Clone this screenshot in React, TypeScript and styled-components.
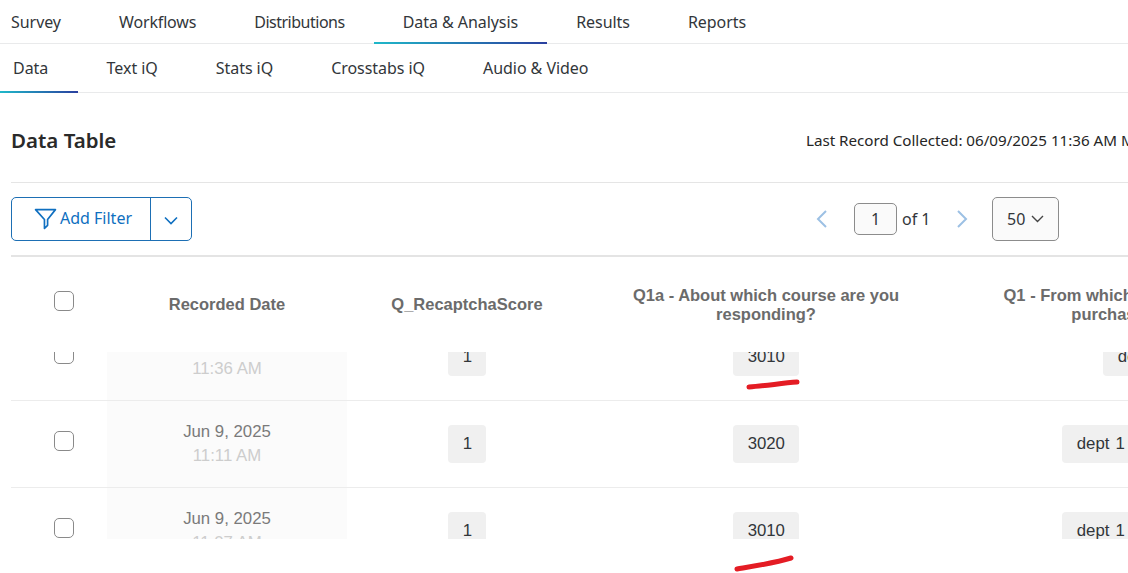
import styled, { createGlobalStyle } from 'styled-components';

const GlobalStyle = createGlobalStyle`
  html, body {
    margin: 0;
    height: 573px;
    overflow: hidden;
    background: #fff;
  }
`;

const Page = styled.div`
  position: relative;
  width: 1128px;
  height: 573px;
  overflow: hidden;
  font-family: 'Noto Sans', 'Liberation Sans', sans-serif;
  color: #32363a;
`;

const TabBar = styled.nav<{ $height: number }>`
  display: flex;
  height: ${(p) => p.$height}px;
  border-bottom: 1px solid #e9eaeb;
`;

const Tab = styled.div<{ $active?: boolean; $left: number; $right: number; $spacing?: number }>`
  position: relative;
  display: flex;
  align-items: center;
  height: 100%;
  padding: 0 ${(p) => p.$right}px 0 ${(p) => p.$left}px;
  font-size: 16px;
  letter-spacing: ${(p) => p.$spacing ?? -0.05}px;
  white-space: nowrap;
  ${(p) =>
    p.$active &&
    `&::after {
      content: '';
      position: absolute;
      left: 0;
      right: 0;
      bottom: -1px;
      height: 2px;
      background: linear-gradient(90deg, #1fb8c9 0%, #2a3f9f 100%);
    }`}
`;

const Content = styled.div`
  width: 1400px;
  padding-left: 11px;
`;

const TitleRow = styled.div`
  display: flex;
  align-items: center;
  height: 90px;
  padding-top: 5px;
  box-sizing: border-box;
  border-bottom: 1px solid #e5e5e5;
`;

const Title = styled.h1`
  flex: 0 0 795px;
  margin: 0;
  font-size: 20.5px;
  font-weight: 600;
  color: #2a2a2a;
`;

const LastRecord = styled.span`
  font-size: 15.2px;
  letter-spacing: -0.02px;
  white-space: nowrap;
  color: #262626;
`;

const Toolbar = styled.div`
  display: flex;
  align-items: center;
  height: 72px;
  border-bottom: 2px solid #e4e4e4;
`;

const SplitButton = styled.div`
  display: flex;
  width: 181px;
  height: 44px;
  box-sizing: border-box;
  border: 1px solid #1d6fb4;
  border-radius: 5px;
  color: #0f6fc0;
`;

const FilterPart = styled.div`
  display: flex;
  align-items: center;
  gap: 3px;
  width: 139px;
  padding: 0 0 2px 22px;
  box-sizing: border-box;
  border-right: 1px solid #1d6fb4;
  font-size: 16px;
`;

const CaretPart = styled.div`
  flex: 1;
  display: flex;
  align-items: center;
  justify-content: center;
  padding-top: 2px;
`;

const Pager = styled.div`
  display: flex;
  align-items: center;
  margin-left: 623px;
`;

const PagerArrow = styled.svg`
  display: block;
  width: 14px;
  height: 20px;
  fill: none;
  stroke: #9cc0e4;
  stroke-width: 2;
`;

const PageInput = styled.div`
  display: flex;
  align-items: center;
  justify-content: center;
  width: 43px;
  height: 32px;
  margin: 0 5px 0 25px;
  box-sizing: border-box;
  border: 1px solid #8c8c8c;
  border-radius: 5px;
  background: #fafafa;
  font-size: 16px;
`;

const PageOf = styled.span`
  width: 53px;
  font-size: 16px;
  color: #32363a;
`;

const PageSize = styled.div`
  display: flex;
  align-items: center;
  gap: 6px;
  width: 67px;
  height: 44px;
  margin-left: 23px;
  padding-left: 14px;
  box-sizing: border-box;
  border: 1px solid #8c8c8c;
  border-radius: 5px;
  background: #fafafa;
  font-size: 16px;
`;

const Columns = styled.div`
  display: grid;
  grid-template-columns: 96px 240px 240px 358px 393px;
`;

const HeaderRow = styled(Columns)`
  height: 95px;
  align-items: center;
`;

const HeaderCell = styled.div<{ $pad?: number }>`
  padding: 0 ${(p) => p.$pad ?? 10}px;
  text-align: center;
  font-family: 'Liberation Sans', Arial, sans-serif;
  font-size: 16.5px;
  font-weight: 700;
  line-height: 19px;
  color: #6b6b6b;
`;

const CheckCell = styled.div<{ $offset: number }>`
  display: flex;
  justify-content: center;
  align-self: start;
  padding: ${(p) => p.$offset}px 0 0 10px;
`;

const Checkbox = styled.span`
  display: block;
  width: 20px;
  height: 20px;
  box-sizing: border-box;
  border: 1px solid #8a8a8a;
  border-radius: 5px;
  background: #fff;
`;

const Viewport = styled.div`
  height: 187px;
  overflow: hidden;
  font-family: 'Liberation Sans', Arial, sans-serif;
`;

const Rows = styled.div`
  margin-top: -38px;
`;

const Row = styled(Columns)`
  height: 87px;
  box-sizing: border-box;
  border-bottom: 1px solid #ececec;
`;

const DateCell = styled.div`
  padding-top: 19px;
  text-align: center;
  background: #fbfbfb;
  font-size: 16.8px;
  line-height: 24px;
  color: #7a7a7a;
`;

const TimeText = styled.div`
  color: #cdcdcd;
`;

const ChipCell = styled.div`
  display: flex;
  justify-content: center;
  padding-top: 24px;
`;

const Chip = styled.span`
  height: 38px;
  padding: 0 14px 0 14.6px;
  border-radius: 4px;
  background: #f0f0f0;
  font-size: 16.8px;
  line-height: 38px;
  word-spacing: 1.5px;
  white-space: nowrap;
  color: #32363a;
`;

const Annotations = styled.svg`
  position: absolute;
  top: 0;
  left: 0;
  width: 1128px;
  height: 573px;
  pointer-events: none;
  fill: none;
  stroke: #e41c24;
  stroke-width: 5;
  stroke-linecap: round;
`;

const records = [
  { date: 'Jun 9, 2025', time: '11:36 AM', score: '1', course: '3010', dept: 'dept 2' },
  { date: 'Jun 9, 2025', time: '11:11 AM', score: '1', course: '3020', dept: 'dept 1 via dept 2' },
  { date: 'Jun 9, 2025', time: '11:07 AM', score: '1', course: '3010', dept: 'dept 1 via dept 2' },
];

const mainTabs = [
  { name: 'Survey' },
  { name: 'Workflows', spacing: -0.15 },
  { name: 'Distributions', spacing: -0.5 },
  { name: 'Data & Analysis' },
  { name: 'Results' },
  { name: 'Reports' },
];
const subTabs = ['Data', 'Text iQ', 'Stats iQ', 'Crosstabs iQ', 'Audio & Video'];

export default function App() {
  return (
    <Page>
      <GlobalStyle />
      <TabBar $height={43}>
        {mainTabs.map((tab, i) => (
          <Tab
            key={tab.name}
            $left={i === 0 ? 11 : 29}
            $right={29}
            $spacing={tab.spacing}
            $active={tab.name === 'Data & Analysis'}
          >
            {tab.name}
          </Tab>
        ))}
      </TabBar>
      <TabBar $height={48}>
        {subTabs.map((name, i) => (
          <Tab key={name} $left={i === 0 ? 13 : i === 1 ? 28.4 : 29} $right={i === 0 ? 30 : 29} $active={i === 0}>
            {name}
          </Tab>
        ))}
      </TabBar>

      <Content>
        <TitleRow>
          <Title>Data Table</Title>
          <LastRecord>Last Record Collected: 06/09/2025 11:36 AM MDT</LastRecord>
        </TitleRow>

        <Toolbar>
          <SplitButton>
            <FilterPart>
              <svg width="23" height="23" viewBox="0 0 22 22" fill="none" stroke="currentColor" strokeWidth="1.6" strokeLinejoin="round">
                <path d="M1.5 2.5h19L13 12v5.5L10 20.5V12z" />
              </svg>
              Add Filter
            </FilterPart>
            <CaretPart>
              <svg width="14" height="9" viewBox="0 0 14 9" fill="none" stroke="currentColor" strokeWidth="1.6">
                <path d="M1 1.5l6 6 6-6" />
              </svg>
            </CaretPart>
          </SplitButton>
          <Pager>
            <PagerArrow viewBox="0 0 14 20">
              <path d="M11 2L3 10l8 8" />
            </PagerArrow>
            <PageInput>1</PageInput>
            <PageOf>of 1</PageOf>
            <PagerArrow viewBox="0 0 14 20">
              <path d="M3 2l8 8-8 8" />
            </PagerArrow>
            <PageSize>
              50
              <svg width="13" height="8" viewBox="0 0 13 8" fill="none" stroke="#444" strokeWidth="1.4">
                <path d="M1 1l5.5 5.5L12 1" />
              </svg>
            </PageSize>
          </Pager>
        </Toolbar>

        <HeaderRow>
          <CheckCell $offset={34}>
            <Checkbox />
          </CheckCell>
          <HeaderCell>Recorded Date</HeaderCell>
          <HeaderCell>Q_RecaptchaScore</HeaderCell>
          <HeaderCell $pad={30}>Q1a - About which course are you responding?</HeaderCell>
          <HeaderCell $pad={30}>Q1 - From which department would purchases come?</HeaderCell>
        </HeaderRow>

        <Viewport>
          <Rows>
            {records.map((r) => (
              <Row key={r.time}>
                <CheckCell $offset={30}>
                  <Checkbox />
                </CheckCell>
                <DateCell>
                  {r.date}
                  <TimeText>{r.time}</TimeText>
                </DateCell>
                <ChipCell>
                  <Chip>{r.score}</Chip>
                </ChipCell>
                <ChipCell>
                  <Chip>{r.course}</Chip>
                </ChipCell>
                <ChipCell>
                  <Chip>{r.dept}</Chip>
                </ChipCell>
              </Row>
            ))}
          </Rows>
        </Viewport>
      </Content>

      <Annotations viewBox="0 0 1128 573">
        <path d="M749 387 C765 386 782 383 797 382" />
        <path d="M737 569 C755 566 775 563 791 558" />
      </Annotations>
    </Page>
  );
}
